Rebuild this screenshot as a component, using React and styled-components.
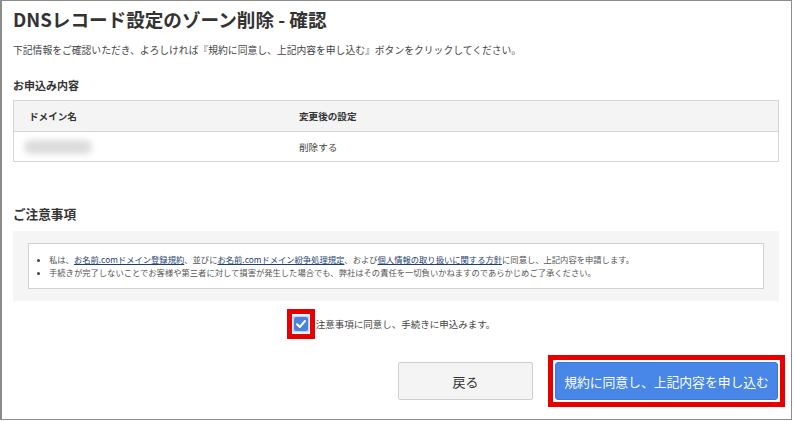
import React from 'react';
import styled, { createGlobalStyle } from 'styled-components';

const GlobalStyle = createGlobalStyle`
  body {
    margin: 0;
    background: #fff;
    font-family: "Noto Sans CJK JP", "Noto Sans", sans-serif;
    color: #333;
  }
`;

const notes = [
  [
    '私は、',
    { link: 'お名前.comドメイン登録規約' },
    '、並びに',
    { link: 'お名前.comドメイン紛争処理規定' },
    '、および',
    { link: '個人情報の取り扱いに関する方針' },
    'に同意し、上記内容を申請します。',
  ],
  ['手続きが完了しないことでお客様や第三者に対して損害が発生した場合でも、弊社はその責任を一切負いかねますのであらかじめご了承ください。'],
];

const App = () => {
  return (
    <>
      <GlobalStyle />
      <Frame>
        <Title>DNSレコード設定のゾーン削除 - 確認</Title>
        <Lead>
          下記情報をご確認いただき、よろしければ『規約に同意し、上記内容を申し込む』ボタンをクリックしてください。
        </Lead>

        <SectionLabel>お申込み内容</SectionLabel>
        <Table>
          <HeadRow>
            <Cell bold>ドメイン名</Cell>
            <Cell bold>変更後の設定</Cell>
          </HeadRow>
          <Row>
            <Cell>
              <Blurred />
            </Cell>
            <Cell>削除する</Cell>
          </Row>
        </Table>

        <NoticeLabel>ご注意事項</NoticeLabel>
        <NoticeBox>
          <NoticeList>
            {notes.map((parts, i) => (
              <li key={i}>
                {parts.map((p, j) =>
                  typeof p === 'string' ? p : <NoteLink key={j}>{p.link}</NoteLink>,
                )}
              </li>
            ))}
          </NoticeList>
        </NoticeBox>

        <AgreeRow>
          <CheckMark>
            <svg width="18" height="20" viewBox="0 0 18 20">
              <rect x="0.5" y="1.5" width="17" height="17" rx="2" fill="#c5d6f3" />
              <rect x="2" y="3" width="14" height="14" rx="2" fill="#4a82de" />
              <path d="M5 10.2 L7.8 13 L13 7" fill="none" stroke="#fff" strokeWidth="2" strokeLinecap="round" strokeLinejoin="round" />
            </svg>
          </CheckMark>
          <AgreeText>注意事項に同意し、手続きに申込みます。</AgreeText>
        </AgreeRow>

        <ButtonRow>
          <BackButton>戻る</BackButton>
          <Highlight>
            <SubmitButton>規約に同意し、上記内容を申し込む</SubmitButton>
          </Highlight>
        </ButtonRow>
      </Frame>
    </>
  );
};

const Frame = styled.div`
  width: 792px;
  height: 420px;
  box-sizing: border-box;
  border: 1px solid #8c8c8c;
  border-left-width: 2px;
  padding: 0 12px 0 11px;
`;

const Title = styled.h1`
  margin: 6px 0 0;
  font-size: 18.6px;
  line-height: 24px;
  font-weight: 700;
  color: #333;
`;

const Lead = styled.p`
  margin: 12px 0 0;
  font-size: 9.8px;
  line-height: 14px;
  color: #444;
`;

const SectionLabel = styled.h2`
  margin: 20px 0 0;
  font-size: 11px;
  line-height: 16px;
  font-weight: 700;
  color: #333;
`;

const Table = styled.div`
  margin-top: 7px;
  border: 1px solid #d6d6d6;
`;

const Row = styled.div`
  display: grid;
  grid-template-columns: 270px 1fr;
  height: 29px;
  align-items: center;
`;

const HeadRow = styled(Row)`
  height: 30px;
  background: #f4f4f4;
  border-bottom: 1px solid #d6d6d6;
`;

const Cell = styled.div`
  padding-left: 15px;
  font-size: 9.6px;
  font-weight: ${(p) => (p.bold ? 700 : 400)};
  color: ${(p) => (p.bold ? '#333' : '#444')};
  display: flex;
  align-items: center;
`;

const Blurred = styled.span`
  display: block;
  width: 68px;
  height: 14px;
  margin-left: -5px;
  border-radius: 7px;
  background: #dcdcdc;
  filter: blur(3px);
`;

const NoticeLabel = styled.h2`
  margin: 43px 0 0;
  font-size: 12.6px;
  line-height: 18px;
  font-weight: 700;
  color: #333;
`;

const NoticeBox = styled.div`
  margin-top: 8px;
  background: #f5f5f5;
  padding: 12px 15px;
`;

const NoticeList = styled.ul`
  margin: 0;
  padding: 9px 0 9px 20px;
  background: #fff;
  border: 1px solid #d2d2d2;
  font-size: 8.3px;
  line-height: 13px;
  color: #555;
  li::marker {
    font-size: 7px;
    color: #444;
  }
`;

const NoteLink = styled.a`
  color: #1f3f73;
  text-decoration: underline;
`;

const AgreeRow = styled.div`
  margin-top: 8px;
  height: 30px;
  display: flex;
  align-items: center;
  justify-content: center;
  padding-right: 10px;
`;

const CheckMark = styled.span`
  display: block;
  width: 18px;
  height: 20px;
  margin: 0 6px 0 5px;
  outline: 5px solid #e60000;
  svg {
    display: block;
  }
`;

const AgreeText = styled.span`
  font-size: 9.5px;
  color: #444;
`;

const ButtonRow = styled.div`
  margin-top: 16px;
  display: flex;
  align-items: center;
  justify-content: flex-end;
  gap: 15px;
  margin-right: -6px;
`;

const BackButton = styled.button`
  width: 135px;
  height: 38px;
  border: 1px solid #cfcfcf;
  border-radius: 2px;
  background: #f4f4f4;
  color: #333;
  font-family: inherit;
  font-size: 13px;
`;

const Highlight = styled.div`
  border: 5px solid #e60000;
  padding: 2px;
  display: flex;
`;

const SubmitButton = styled.button`
  width: 223px;
  height: 38px;
  border: 1px solid #3b78d6;
  border-radius: 3px;
  background: #4887e8;
  color: #fff;
  font-family: inherit;
  font-size: 12.8px;
`;

export default App;
